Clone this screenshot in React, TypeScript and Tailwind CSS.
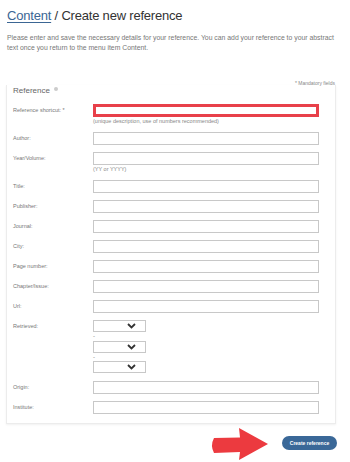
import React from "react";

const Input = ({ red }: { red?: boolean }) => (
  <div
    className={
      red
        ? "w-[226px] h-[13px] border-[3px] border-[#e8404a] bg-white"
        : "w-[226px] h-[13px] border border-[#c8c8c8] bg-white"
    }
  />
);

const Select = () => (
  <div className="w-[53px] h-[12px] border border-[#c8c8c8] bg-white flex items-center justify-end pr-[9px]">
    <svg width="9" height="6" viewBox="0 0 9 6">
      <path d="M1 1 L4.5 4.5 L8 1" fill="none" stroke="#333" strokeWidth="1.8" />
    </svg>
  </div>
);

const Row = ({ label, children, className }: { label: string; children: React.ReactNode; className?: string }) => (
  <div className={"flex " + (className ?? "")}>
    <div className="w-[80px] pt-[2px] text-[5.5px] leading-[8px] text-[#777]">{label}</div>
    <div className="flex flex-col">{children}</div>
  </div>
);

const Hint = ({ children }: { children: React.ReactNode }) => (
  <div className="text-[5.5px] leading-[8px] text-[#888]">{children}</div>
);

export default function App() {
  return (
    <div className="w-[350px] h-[462px] bg-white overflow-hidden px-[6px] pt-[6px]" style={{ fontFamily: '"Liberation Sans", Arial, sans-serif' }}>
      <h1 className="ml-[1px] text-[13px] tracking-[-0.2px] leading-[20px] text-[#333]">
        <span className="text-[#3b6694] underline decoration-1 underline-offset-2">Content</span> / Create new reference
      </h1>
      <p className="ml-[1px] mt-[7px] text-[6.85px] leading-[10px] text-[#777] w-[331px]">
        Please enter and save the necessary details for your reference. You can add your reference to your abstract text once you return to the menu item Content.
      </p>
      <div className="mt-[27px] w-[330px] text-right pr-[1px] text-[5px] leading-[7px] text-[#888]">* Mandatory fields</div>
      <div className="w-[330px] border-x border-b border-[#ececec] shadow-[0_1px_2px_rgba(0,0,0,0.06)] px-[6px] pb-[9px]">
        <div className="flex items-center gap-[4px] -mt-[2px] h-[12px]">
          <span className="text-[8px] text-[#666]">Reference</span>
          <span className="w-[4px] h-[4px] rounded-full bg-[#ccc] -mt-[4px]" />
        </div>
        <div className="flex flex-col gap-[7px] mt-[7px]">
          <Row label="Reference shortcut: *">
            <Input red />
            <Hint>(unique description, use of numbers recommended)</Hint>
          </Row>
          <Row label="Author:">
            <Input />
          </Row>
          <Row label="Year/Volume:">
            <Input />
            <Hint>(YY or YYYY)</Hint>
          </Row>
          <Row label="Title:">
            <Input />
          </Row>
          <Row label="Publisher:">
            <Input />
          </Row>
          <Row label="Journal:">
            <Input />
          </Row>
          <Row label="City:">
            <Input />
          </Row>
          <Row label="Page number:">
            <Input />
          </Row>
          <Row label="Chapter/Issue:">
            <Input />
          </Row>
          <Row label="Url:">
            <Input />
          </Row>
          <Row label="Retrieved:">
            <Select />
            <div className="h-[9px] text-[6px] leading-[9px] text-[#777]">-</div>
            <Select />
            <div className="h-[8px] text-[6px] leading-[8px] text-[#777]">-</div>
            <Select />
          </Row>
          <Row label="Origin:" className="mt-[1px]">
            <Input />
          </Row>
          <Row label="Institute:">
            <Input />
          </Row>
        </div>
      </div>
      <div className="flex justify-end items-center w-[331px] gap-[12px]">
        <svg width="60" height="37" viewBox="0 0 60 37">
          <path d="M4 14 L30 13.5 L29 4 L58 20 L29 36 L30 28 L4 29 Q0 21.5 4 14 Z" fill="#ec3a3f" />
        </svg>
        <button className="w-[55px] h-[14px] rounded-full bg-[#3a6898] text-white text-[5px] font-bold leading-[14px]">
          Create reference
        </button>
      </div>
    </div>
  );
}
